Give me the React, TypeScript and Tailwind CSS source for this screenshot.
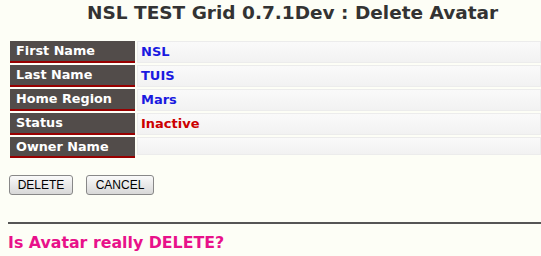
import React from "react";

const rows: { label: string; value: string; red?: boolean }[] = [
  { label: "First Name", value: "NSL" },
  { label: "Last Name", value: "TUIS" },
  { label: "Home Region", value: "Mars" },
  { label: "Status", value: "Inactive", red: true },
  { label: "Owner Name", value: "" },
];

export default function App() {
  return (
    <div
      className="w-[541px] h-[256px] overflow-hidden bg-[#fdfef6]"
      style={{ fontFamily: '"DejaVu Sans", Verdana, sans-serif' }}
    >
      <div className="pt-[2px] pl-[87px] text-[18.5px] leading-[22px] font-bold text-[#333333] whitespace-nowrap">
        NSL TEST Grid 0.7.1Dev : Delete Avatar
      </div>
      <div className="mt-[17px] ml-[10px] flex flex-col gap-[2px]">
        {rows.map((r) => (
          <div key={r.label} className="flex gap-[2px]">
            <div className="w-[125px] shrink-0 bg-[#524c4a] border-b-2 border-[#990000] pl-[6px] text-white text-[12.8px] font-bold flex items-center">
              {r.label}
            </div>
            <div
              className={`flex-1 border border-[#ececec] bg-gradient-to-b from-[#fafafa] to-[#f2f2f2] pl-[3px] text-[13px] font-bold flex items-center ${
                r.value ? "h-[22px]" : "h-[18px]"
              } ${r.red ? "text-[#cc0000]" : "text-[#1a1ae0]"}`}
            >
              {r.value}
            </div>
          </div>
        ))}
      </div>
      <div
        className="mt-[17px] ml-[9px] flex gap-[13px]"
        style={{ fontFamily: '"Liberation Sans", Arial, sans-serif' }}
      >
        <button className="w-[64px] h-[20px] rounded-[3px] border border-[#888888] bg-gradient-to-b from-[#fafafa] to-[#d8d8d8] text-[12px] text-black leading-none">
          DELETE
        </button>
        <button className="w-[68px] h-[20px] rounded-[3px] border border-[#888888] bg-gradient-to-b from-[#fafafa] to-[#d8d8d8] text-[12px] text-black leading-none">
          CANCEL
        </button>
      </div>
      <div className="mt-[27px] ml-[8px] border-t-2 border-[#555555]" />
      <div className="mt-[7px] ml-[8px] text-[15.8px] font-bold text-[#e8118a] whitespace-nowrap">
        Is Avatar really DELETE?
      </div>
    </div>
  );
}
